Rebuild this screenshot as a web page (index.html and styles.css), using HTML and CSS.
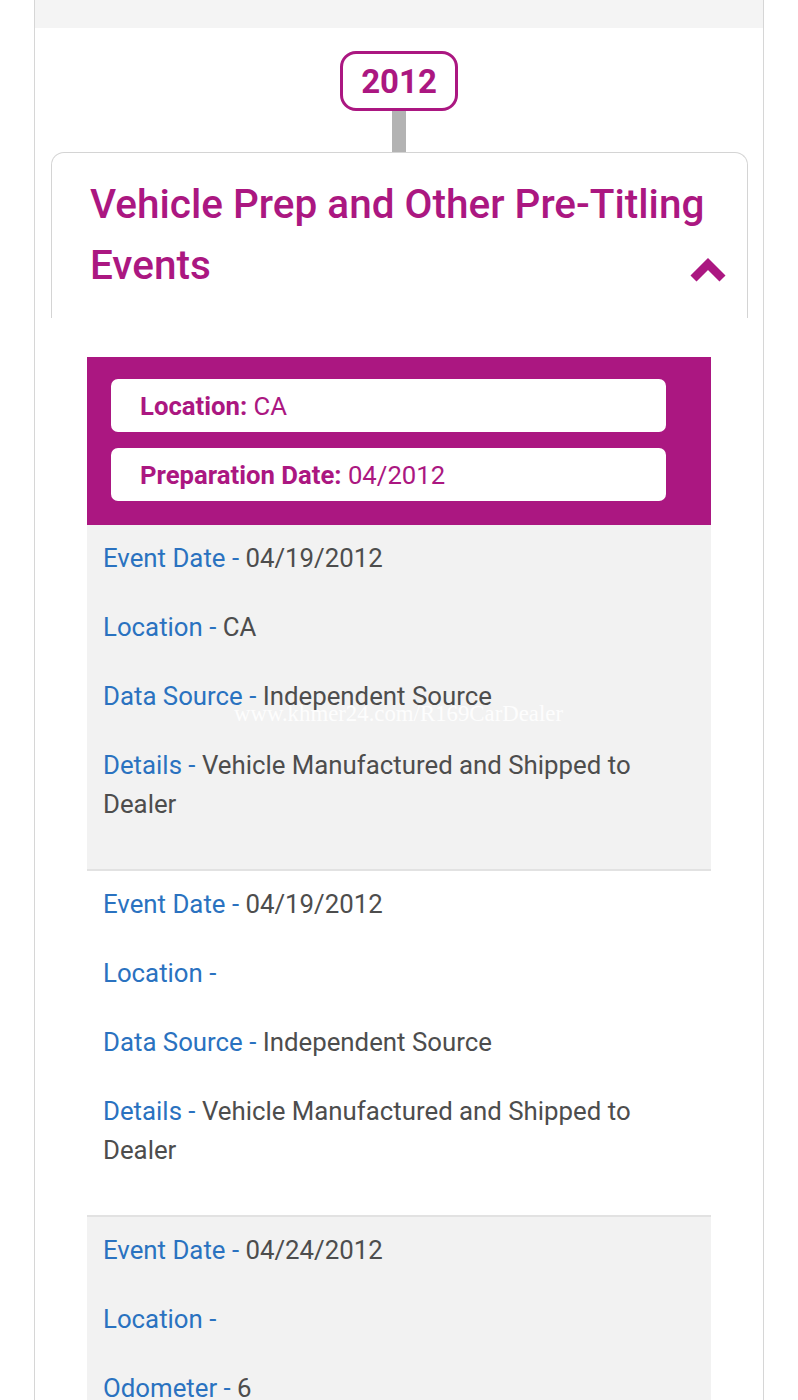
FILE: index.html
```html
<!DOCTYPE html>
<html>
<head>
<meta charset="utf-8">
<link rel="stylesheet" href="styles.css">
</head>
<body>
<div class="page">
  <div class="top-strip"></div>
  <div class="year-wrap">
    <div class="year-badge">2012</div>
    <div class="year-stem"></div>
  </div>
  <div class="card-head">
    <h2 class="card-title">Vehicle Prep and Other Pre-Titling Events</h2>
    <svg class="chevron" viewBox="0 0 38 27" width="38" height="27">
      <path d="M4.5 22.5 L19 8 L33.5 22.5" fill="none" stroke="#ab1781" stroke-width="8.5" stroke-linejoin="miter" stroke-linecap="butt"/>
    </svg>
  </div>
  <div class="content">
    <div class="summary">
      <div class="pill"><b>Location:</b> CA</div>
      <div class="pill"><b>Preparation Date:</b> 04/2012</div>
    </div>
    <div class="event gray">
      <p><span class="lbl">Event Date - </span>04/19/2012</p>
      <p><span class="lbl">Location - </span>CA</p>
      <p><span class="lbl">Data Source - </span>Independent Source</p>
      <p><span class="lbl">Details - </span>Vehicle Manufactured and Shipped to Dealer</p>
      <div class="watermark">www.khmer24.com/R169CarDealer</div>
    </div>
    <div class="event white">
      <p><span class="lbl">Event Date - </span>04/19/2012</p>
      <p><span class="lbl">Location - </span></p>
      <p><span class="lbl">Data Source - </span>Independent Source</p>
      <p><span class="lbl">Details - </span>Vehicle Manufactured and Shipped to Dealer</p>
    </div>
    <div class="event gray">
      <p><span class="lbl">Event Date - </span>04/24/2012</p>
      <p><span class="lbl">Location - </span></p>
      <p><span class="lbl">Odometer - </span>6</p>
      <p><span class="lbl">Data Source - </span>Independent Source</p>
    </div>
  </div>
</div>
</body>
</html>
```

FILE: styles.css
```css
html, body {
  margin: 0;
  padding: 0;
  background: #ffffff;
  font-family: Roboto, "Noto Sans", "Liberation Sans", sans-serif;
}
.page {
  margin: 0 34px;
  border-left: 1px solid #d6d6d6;
  border-right: 1px solid #d6d6d6;
  height: 1400px;
  overflow: hidden;
  box-sizing: border-box;
}
.top-strip {
  height: 28px;
  background: #f4f4f4;
}
.year-wrap {
  display: flex;
  flex-direction: column;
  align-items: center;
  padding-top: 23px;
}
.year-badge {
  width: 118px;
  height: 60px;
  box-sizing: border-box;
  border: 3px solid #ab1781;
  border-radius: 16px;
  color: #ab1781;
  font-weight: 700;
  font-size: 33px;
  display: flex;
  align-items: center;
  justify-content: center;
  background: #fff;
}
.year-stem {
  width: 14px;
  height: 41px;
  background: #b3b3b3;
}
.card-head {
  position: relative;
  margin: 0 15px 0 16px;
  border: 1.5px solid #d4d4d4;
  border-bottom: none;
  border-radius: 13px 13px 0 0;
  padding: 21px 12px 22px 38px;
}
.card-title {
  margin: 0;
  font-size: 40.5px;
  line-height: 61px;
  font-weight: 500;
  color: #ab1781;
}
.chevron {
  position: absolute;
  right: 20px;
  bottom: 35px;
  display: block;
}
.content {
  margin: 39px 52px 0 52px;
}
.summary {
  background: #ab1781;
  padding: 22px 45px 24px 24px;
  display: flex;
  flex-direction: column;
  gap: 16px;
}
.pill {
  background: #fff;
  border-radius: 7px;
  height: 53px;
  display: flex;
  align-items: center;
  padding-left: 29px;
  color: #ab1781;
  font-size: 25.7px;
  white-space: pre;
}
.pill b {
  font-weight: 700;
}
.event {
  position: relative;
  padding: 14px 40px 15px 16px;
  font-size: 25.8px;
  line-height: 39px;
  color: #4d4d4d;
}
.event + .event {
  border-top: 2px solid #e2e2e2;
}
.event.gray {
  background: #f2f2f2;
}
.event.white {
  background: #ffffff;
}
.event p {
  margin: 0 0 30px 0;
}
.lbl {
  color: #2a72c0;
}
.watermark {
  position: absolute;
  left: 147px;
  top: 177px;
  font-family: "Liberation Serif", "DejaVu Serif", serif;
  font-size: 22.8px;
  line-height: 24px;
  color: rgba(255,255,255,0.9);
  white-space: nowrap;
}
```
